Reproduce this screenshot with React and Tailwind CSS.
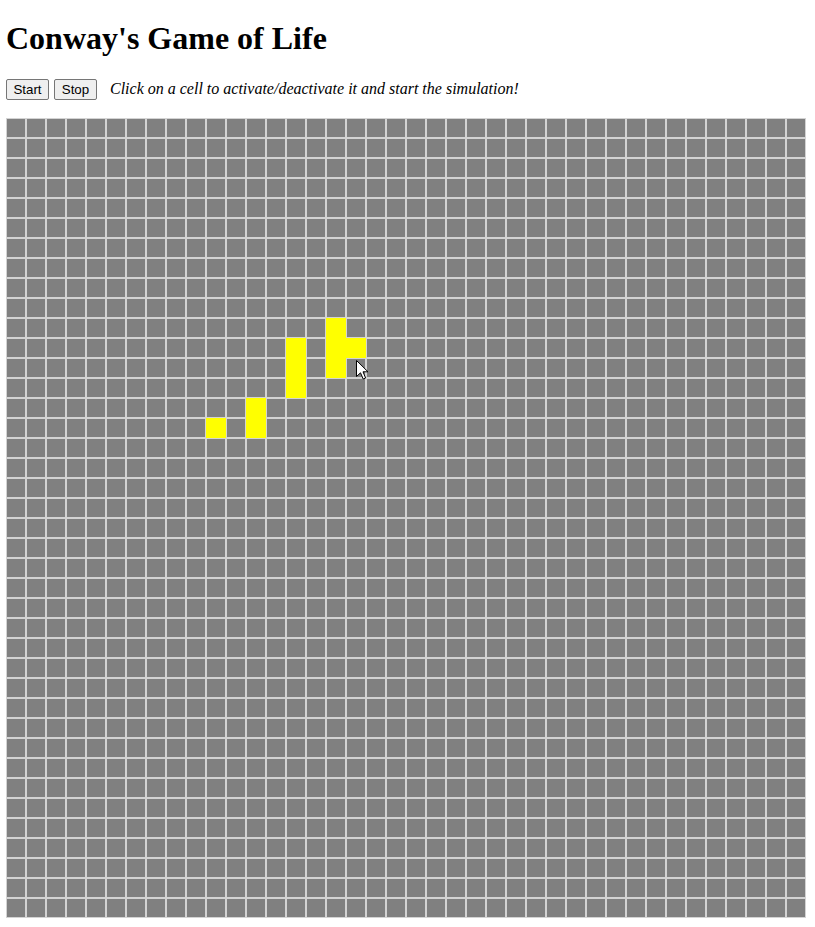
import { useEffect, useRef, useState } from "react";

const SIZE = 40;

// the pattern that is on the board in the screenshot
const seed = [
  [10, 16],
  [11, 14],
  [11, 16],
  [11, 17],
  [12, 14],
  [12, 16],
  [13, 14],
  [14, 12],
  [15, 10],
  [15, 12],
];

const makeGrid = () => {
  const grid = Array.from({ length: SIZE }, () => Array(SIZE).fill(false));
  seed.forEach(([r, c]) => {
    grid[r][c] = true;
  });
  return grid;
};

const nextGen = (grid) =>
  grid.map((row, r) =>
    row.map((alive, c) => {
      let n = 0;
      for (let dr = -1; dr <= 1; dr++) {
        for (let dc = -1; dc <= 1; dc++) {
          if (!dr && !dc) continue;
          const rr = r + dr;
          const cc = c + dc;
          if (rr >= 0 && rr < SIZE && cc >= 0 && cc < SIZE && grid[rr][cc]) n++;
        }
      }
      return alive ? n === 2 || n === 3 : n === 3;
    })
  );

const App = () => {
  const [grid, setGrid] = useState(makeGrid);
  const [running, setRunning] = useState(false);
  const timer = useRef(null);

  useEffect(() => {
    if (!running) return;
    timer.current = setInterval(() => setGrid((g) => nextGen(g)), 200);
    return () => clearInterval(timer.current);
  }, [running]);

  const toggle = (r, c) => {
    setGrid((g) => g.map((row, i) => (i === r ? row.map((v, j) => (j === c ? !v : v)) : row)));
  };

  return (
    <div className="relative min-h-[927px] bg-white px-[6px] pt-[20px] text-black font-['Liberation_Serif',serif]">
      <h1 className="text-[32px] font-bold leading-[37px]">Conway's Game of Life</h1>

      <div className="mt-[20px] flex items-baseline">
        <button
          type="button"
          onClick={() => setRunning(true)}
          className="h-[21px] w-[43px] rounded-[2px] border border-[#767676] bg-[#efefef] text-[13.33px] font-['Liberation_Sans',Arial,sans-serif]"
        >
          Start
        </button>
        <button
          type="button"
          onClick={() => setRunning(false)}
          className="ml-[5px] h-[21px] w-[43px] rounded-[2px] border border-[#767676] bg-[#efefef] text-[13.33px] font-['Liberation_Sans',Arial,sans-serif]"
        >
          Stop
        </button>
        <span className="ml-[13px] text-[16px] italic">
          Click on a cell to activate/deactivate it and start the simulation!
        </span>
      </div>

      <div className="mt-[17px] grid w-[800px] grid-cols-[repeat(40,20px)]">
        {grid.map((row, r) =>
          row.map((alive, c) => (
            <div
              key={`${r}-${c}`}
              onClick={() => toggle(r, c)}
              className={
                alive
                  ? "h-[20px] w-[20px] border border-[#ffff00] bg-[#ffff00]"
                  : "h-[20px] w-[20px] border border-[#d3d3d3] bg-[#808080]"
              }
            />
          ))
        )}
      </div>

      {/* mouse pointer from the screenshot */}
      <svg
        className="pointer-events-none absolute left-[356px] top-[360px]"
        width="13"
        height="20"
        viewBox="0 0 13 20"
      >
        <path
          d="M0.5 0.5 L0.5 16.5 L4.5 12.8 L7.2 19 L9.6 18 L7 11.8 L12 11.8 Z"
          fill="#ffffff"
          stroke="#000000"
          strokeWidth="1"
          strokeLinejoin="round"
        />
      </svg>
    </div>
  );
};

export default App;
